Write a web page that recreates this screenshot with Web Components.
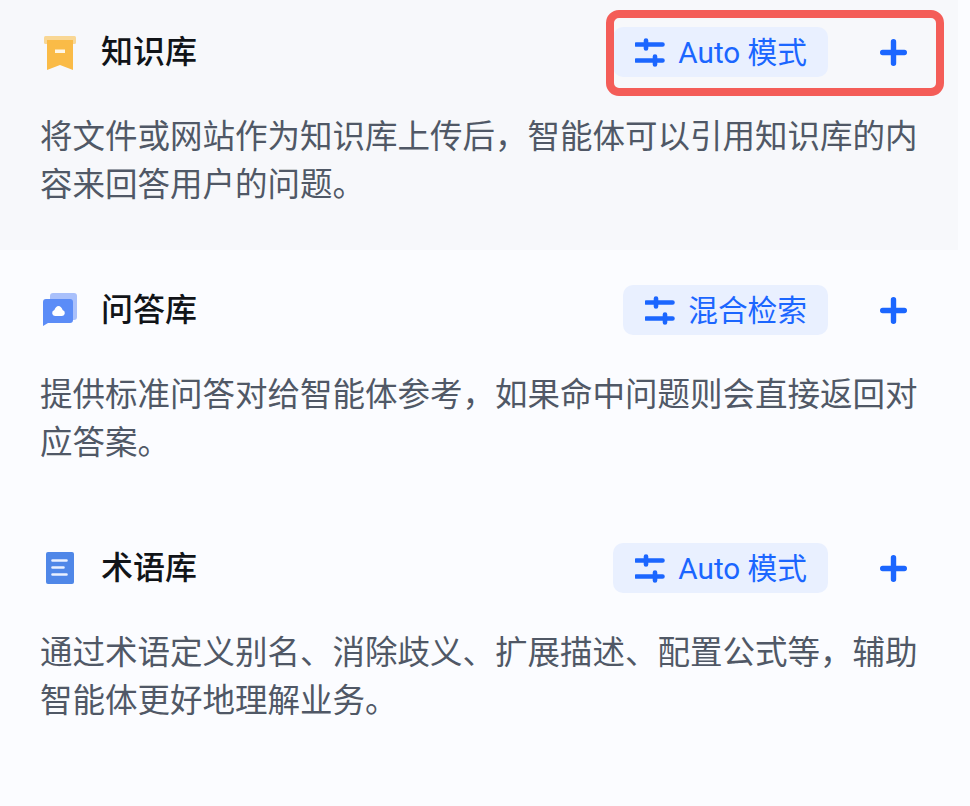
<!DOCTYPE html>
<html lang="zh">
<head>
<meta charset="utf-8">
<title>知识配置</title>
<style>
	html, body { margin: 0; background: #fbfcff; }
	body { font-family: Roboto, "Noto Sans CJK SC", sans-serif; }
</style>
</head>
<body>
<kb-panel>
	<kb-section heading="知识库" mode="Auto 模式" active annotated>
		<kb-icon slot="icon" name="archive"></kb-icon>
		将文件或网站作为知识库上传后，智能体可以引用知识库的内容来回答用户的问题。
	</kb-section>
	<kb-section heading="问答库" mode="混合检索">
		<kb-icon slot="icon" name="chat"></kb-icon>
		提供标准问答对给智能体参考，如果命中问题则会直接返回对应答案。
	</kb-section>
	<kb-section heading="术语库" mode="Auto 模式">
		<kb-icon slot="icon" name="doc"></kb-icon>
		通过术语定义别名、消除歧义、扩展描述、配置公式等，辅助智能体更好地理解业务。
	</kb-section>
</kb-panel>

<script>
// Icon paths, all drawn on a 36x36 box
const ICONS = {
	archive: `
		<rect x="2" y="2" width="32" height="8" rx="1.5" fill="#f9d794"/>
		<path d="M5 6H31V36L18 31L5 36Z" fill="#fabb47"/>
		<rect x="13" y="15.500" width="10" height="3.500" fill="#fff7e6"/>`,
	chat: `
		<path d="M8 4a3 3 0 0 1 3-3H32a3 3 0 0 1 3 3V25a3 3 0 0 1-3 3H8Z" fill="#a9c0fb"/>
		<path d="M1 10a3 3 0 0 1 3-3H28a3 3 0 0 1 3 3V28a3 3 0 0 1-3 3H6L1 34Z" fill="#5b8cf7"/>
		<path d="M13 24a3 3 0 0 1-.6-5.900C13 15.700 14.800 14 16.500 14S20.100 15.700 20.600 18.100A3 3 0 0 1 20 24Z" fill="#fff"/>`,
	doc: `
		<rect x="4" y="2" width="28" height="32" rx="2" fill="#4f87e8"/>
		<path d="M10.500 10.500H24.500M10.500 17.500H21.500M10.500 24.500H24.500" stroke="#eaf1ff" stroke-width="2.600" stroke-linecap="round"/>`,
};

class KbIcon extends HTMLElement {
	connectedCallback() {
		const root = this.shadowRoot || this.attachShadow({ mode: "open" });
		root.innerHTML = `
			<style>
				:host { display: block; width: 36px; height: 36px; }
				svg { display: block; overflow: visible; }
			</style>
			<svg width="36" height="36" viewBox="0 0 36 36">${ICONS[this.getAttribute("name")] || ""}</svg>
		`;
	}
}

class KbModeButton extends HTMLElement {
	constructor() {
		super();
		this.attachShadow({ mode: "open" }).innerHTML = `
			<style>
				:host {
					display: inline-flex;
					align-items: center;
					gap: 13px;
					height: 50px;
					padding: 0 21px 0 22px;
					box-sizing: border-box;
					border-radius: 10px;
					background: #e9f0ff;
					color: #1b66ff;
					font-size: 29.700px;
					white-space: nowrap;
				}
				svg { display: block; flex: none; }
				.label { line-height: 46px; margin-top: 2px; }
			</style>
			<svg width="30" height="30" viewBox="0 0 30 30" fill="none" stroke="#1b66ff" stroke-linecap="round">
				<path d="M1.500 7.500H27.500M1.500 23.500H27.500" stroke-width="4.600"/>
				<path d="M11 3.500V11.500M20 19.500V27.500" stroke-width="4.600"/>
			</svg>
			<span class="label"><slot></slot></span>
		`;
	}
}

class KbSection extends HTMLElement {
	constructor() {
		super();
		this.attachShadow({ mode: "open" }).innerHTML = `
			<style>
				:host {
					display: block;
					height: 258px;
					padding: 35px 12px 0 42px;
					box-sizing: border-box;
					position: relative;
					color: #505866;
				}
				:host(:first-child) { height: 250px; padding-top: 27px; }
				:host([active]) { background: #f7f8fb; margin-right: 12px; padding-right: 0; }
				header { display: flex; align-items: center; height: 50px; }
				h2 {
					margin: 0 0 0 23px;
					flex: 1;
					font-size: 32px;
					font-weight: 500;
					line-height: 46px;
					color: #111418;
				}
				.add { display: block; margin: 0 51px 0 52px; flex: none; }
				p {
					margin: 37px 0 0 -2px;
					width: 882px;
					font-size: 32.500px;
					line-height: 47.500px;
				}
				.note {
					position: absolute;
					left: 606px;
					top: 10px;
					width: 338px;
					height: 86px;
					box-sizing: border-box;
					border: 8px solid #f45d58;
					border-radius: 13px;
				}
			</style>
			<header>
				<slot name="icon"></slot>
				<h2></h2>
				<kb-mode-button></kb-mode-button>
				<svg class="add" width="27" height="27" viewBox="0 0 27 27" stroke="#1b66ff" stroke-width="5.400" stroke-linecap="round">
					<path d="M2.700 13.500H24.300M13.500 2.700V24.300"/>
				</svg>
			</header>
			<p><slot></slot></p>
		`;
	}

	connectedCallback() {
		const root = this.shadowRoot;
		root.querySelector("h2").textContent = this.getAttribute("heading");
		root.querySelector("kb-mode-button").textContent = this.getAttribute("mode");
		if (this.hasAttribute("annotated") && !root.querySelector(".note")) {
			const note = document.createElement("div");
			note.className = "note";
			root.appendChild(note);
		}
	}
}

class KbPanel extends HTMLElement {
	constructor() {
		super();
		this.attachShadow({ mode: "open" }).innerHTML = `
			<style>
				:host { display: block; width: 970px; height: 806px; overflow: hidden; }
			</style>
			<slot></slot>
		`;
	}
}

customElements.define("kb-icon", KbIcon);
customElements.define("kb-mode-button", KbModeButton);
customElements.define("kb-section", KbSection);
customElements.define("kb-panel", KbPanel);
</script>
</body>
</html>
